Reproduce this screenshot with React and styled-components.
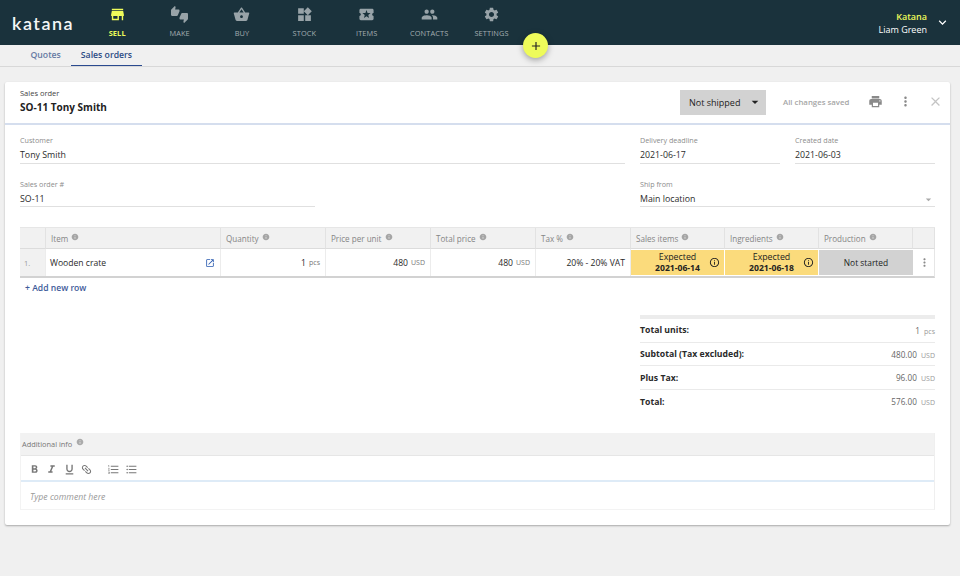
import React from "react";
import styled, { createGlobalStyle } from "styled-components";
import {
  MdStore, MdThumbsUpDown, MdShoppingBasket, MdWidgets, MdLocalActivity, MdPeople, MdSettings,
  MdKeyboardArrowDown, MdAdd, MdArrowDropDown, MdPrint, MdMoreVert, MdClose, MdOpenInNew,
  MdInfo, MdInfoOutline, MdFormatBold, MdFormatItalic, MdFormatUnderlined, MdLink,
  MdFormatListNumbered, MdFormatListBulleted,
} from "react-icons/md";

const navy = "#1a323c";
const lime = "#eefb5a";
const blue = "#2a4a8f";
const font = `"Open Sans", "Liberation Sans", sans-serif`;

const GlobalStyle = createGlobalStyle`
  html, body {
    margin: 0;
    height: 576px;
    overflow: hidden;
    background: #f0f0f0;
    font-family: ${font};
    color: #222;
  }
  * { box-sizing: border-box; }
`;

const Header = styled.header`
  position: relative;
  display: flex;
  align-items: flex-start;
  height: 45px;
  background: ${navy};
`;
const Logo = styled.div`
  width: 86px;
  padding: 12px 0 0 12px;
  font-family: "Lato", sans-serif;
  font-size: 18px;
  line-height: 22px;
  font-weight: 600;
  letter-spacing: 1.5px;
  color: #f4f6f6;
`;
const Nav = styled.nav`
  display: flex;
`;
const NavItem = styled.div`
  width: 62.4px;
  display: flex;
  flex-direction: column;
  align-items: center;
  padding-top: 6px;
  font-size: 7.4px;
  line-height: 10px;
  letter-spacing: 0.1px;
  font-weight: ${p => (p.$active ? 700 : 400)};
  color: ${p => (p.$active ? lime : "#a3adb1")};
  svg {
    width: 17px;
    height: 17px;
    margin-bottom: 5px;
    color: ${p => (p.$active ? lime : "#98a3a8")};
  }
`;
const Account = styled.div`
  margin-left: auto;
  display: flex;
  align-items: center;
  height: 45px;
  padding-right: 10px;
  color: #fff;
  svg { width: 15px; height: 15px; margin-left: 8px; margin-top: -1px; }
`;
const AccountText = styled.div`
  text-align: right;
  font-size: 9px;
  line-height: 13px;
  font-weight: 500;
`;
const Company = styled.div`
  color: ${lime};
  font-weight: 600;
`;
const Fab = styled.div`
  position: absolute;
  left: 523px;
  top: 33px;
  width: 25px;
  height: 25px;
  border-radius: 50%;
  display: flex;
  align-items: center;
  justify-content: center;
  background: ${lime};
  color: #222;
  box-shadow: 0 2px 6px rgba(0, 0, 0, 0.35);
  z-index: 2;
  svg { width: 14px; height: 14px; }
`;
const Tabs = styled.div`
  display: flex;
  height: 22px;
  padding-left: 21px;
  border-bottom: 1px solid #d8d8d8;
`;
const Tab = styled.div`
  height: 21px;
  padding: 0 9.5px;
  border-bottom: ${p => (p.$active ? `1px solid ${blue}` : "none")};
  font-size: 8.7px;
  line-height: 21px;
  font-weight: 600;
  color: ${p => (p.$active ? "#2b4a84" : "#6679a3")};
  margin-left: ${p => (p.$active ? "1px" : "0")};
`;
const Card = styled.main`
  margin: 15px 10px 0 5px;
  height: 443px;
  background: #fff;
  border-radius: 2px;
  box-shadow: 0 1px 2px rgba(0, 0, 0, 0.3);
`;
const CardHeader = styled.div`
  display: flex;
  align-items: center;
  height: 43px;
  padding: 0 6px 2px 15px;
  border-bottom: 2px solid #d5deee;
`;
const Title = styled.div`
  flex: 1;
`;
const TitleLabel = styled.div`
  font-size: 7.5px;
  line-height: 11px;
  color: #444;
`;
const TitleText = styled.div`
  font-size: 10px;
  line-height: 16px;
  font-weight: 700;
  color: #222;
`;
const StatusButton = styled.div`
  display: flex;
  align-items: center;
  justify-content: space-between;
  width: 86px;
  height: 25px;
  padding: 0 3px 0 9px;
  margin-top: 1px;
  background: #d2d2d2;
  font-size: 9px;
  font-weight: 500;
  svg { width: 16px; height: 16px; }
`;
const Saved = styled.div`
  width: 84px;
  margin-left: 17px;
  font-size: 7.8px;
  font-weight: 600;
  color: #a6a6a6;
`;
const HeaderIcon = styled.div`
  display: flex;
  width: ${p => p.$w}px;
  justify-content: center;
  color: ${p => p.$color || "#8a8a8a"};
  svg { width: ${p => p.$size || 15}px; height: ${p => p.$size || 15}px; }
`;
const Body = styled.div`
  padding: 10px 15px 0;
`;
const FieldGrid = styled.div`
  display: grid;
  grid-template-columns: 295px 310px 15px 140px 15px 140px;
  grid-template-rows: 29px 28px;
  row-gap: 15px;
`;
const Field = styled.div`
  grid-column: ${p => p.$col};
  border-bottom: 1px solid #e0e0e0;
`;
const FieldLabel = styled.div`
  font-size: 7.2px;
  line-height: 10px;
  color: #8c8c8c;
`;
const FieldValue = styled.div`
  display: flex;
  justify-content: space-between;
  align-items: center;
  margin-top: 3.5px;
  font-size: 8.8px;
  line-height: 13px;
  color: #2c2c2c;
  svg { width: 13px; height: 13px; color: #aaa; }
`;
const Table = styled.div`
  display: grid;
  grid-template-columns: 26px 175px 105px 105px 105px 95px 94px 94px 94px 22px;
  grid-template-rows: 21px 27px;
  width: 915px;
  margin-top: 20px;
  border-top: 1px solid #e6e6e6;
  border-bottom: 2px solid #d2d2d2;
  border-right: 1px solid #e6e6e6;
`;
const HeadCell = styled.div`
  display: flex;
  align-items: center;
  padding-left: 5px;
  background: #f1f1f1;
  border-right: 1px solid #e2e2e2;
  border-bottom: 1px solid #dcdcdc;
  font-size: 8.1px;
  color: #858585;
  svg { width: 8px; height: 8px; margin: -3px 0 0 3px; color: #a5a5a5; }
`;
const Cell = styled.div`
  display: flex;
  align-items: center;
  justify-content: ${p => (p.$right ? "flex-end" : "space-between")};
  padding: 0 5px 0 ${p => (p.$right ? "5px" : "4px")};
  border-right: 1px solid #ececec;
  font-size: 8.6px;
  color: #2a2a2a;
`;
const IndexCell = styled(Cell)`
  background: #f1f1f1;
  font-size: 7.4px;
  color: #999;
`;
const Unit = styled.span`
  margin-left: 3px;
  font-size: 7px;
  color: #777;
`;
const ItemLink = styled.span`
  display: flex;
  color: #2a5bb0;
  svg { width: 10px; height: 10px; }
`;
const StatusCell = styled.div`
  position: relative;
  margin: 1px ${p => (p.$grey ? "0" : "1px")} 1px 0;
  background: ${p => (p.$grey ? "#d2d2d2" : "#fbdb7c")};
  display: flex;
  flex-direction: column;
  align-items: center;
  justify-content: center;
  font-size: ${p => (p.$grey ? "8.4px" : "8.8px")};
  line-height: 11px;
  color: #222;
  b { font-weight: 700; font-size: 8.6px; }
  svg {
    position: absolute;
    right: 4px;
    top: 7px;
    width: 11px;
    height: 11px;
  }
`;
const MenuCell = styled(Cell)`
  justify-content: center;
  padding: 0;
  border-right: none;
  color: #8a8a8a;
  svg { width: 13px; height: 13px; }
`;
const AddRow = styled.div`
  margin: 4px 0 0 5px;
  font-size: 8.6px;
  line-height: 12px;
  font-weight: 600;
  color: #3d5a99;
`;
const Summary = styled.div`
  width: 295px;
  margin: 21px 0 0 620px;
  border-top: 4px solid #ececec;
`;
const SummaryRow = styled.div`
  display: flex;
  justify-content: space-between;
  align-items: center;
  height: 23.7px;
  border-bottom: ${p => (p.$last ? "none" : "1px solid #eaeaea")};
  font-size: 8.2px;
  color: #666;
  b { font-weight: 700; font-size: 8.7px; color: #2a2a2a; }
`;
const SummaryUnit = styled.span`
  margin-left: 2px;
  font-size: 7px;
  color: #999;
`;
const Editor = styled.div`
  width: 915px;
  margin-top: 19px;
  border-right: 1px solid #efefef;
  border-left: 1px solid #f3f3f3;
  border-bottom: 1px solid #f3f3f3;
`;
const EditorHead = styled.div`
  display: flex;
  align-items: center;
  height: 23px;
  padding-left: 1px;
  background: #f2f2f2;
  border-bottom: 1px solid #e6e6e6;
  font-size: 7.4px;
  color: #777;
  svg { width: 8px; height: 8px; margin: -3px 0 0 4px; color: #aaa; }
`;
const Toolbar = styled.div`
  display: flex;
  align-items: center;
  height: 26px;
  padding: 3px 0 0 6.5px;
  border-bottom: 2px solid #deebf7;
  color: #777;
  svg { width: 13px; height: 13px; margin-right: 4.5px; }
`;
const ToolGap = styled.span`
  width: 9.5px;
`;
const Comment = styled.div`
  height: 27px;
  padding-left: 9px;
  font-size: 8.7px;
  line-height: 30px;
  font-style: italic;
  color: #999;
`;
const RotatedLink = styled(MdLink)`
  transform: rotate(45deg);
`;

const nav = [
  ["SELL", MdStore, true],
  ["MAKE", MdThumbsUpDown],
  ["BUY", MdShoppingBasket],
  ["STOCK", MdWidgets],
  ["ITEMS", MdLocalActivity],
  ["CONTACTS", MdPeople],
  ["SETTINGS", MdSettings],
];

const summary = [
  ["Total units:", "1", "pcs"],
  ["Subtotal (Tax excluded):", "480.00", "USD"],
  ["Plus Tax:", "96.00", "USD"],
  ["Total:", "576.00", "USD"],
];

const heads = ["Item", "Quantity", "Price per unit", "Total price", "Tax %", "Sales items", "Ingredients", "Production"];

export default function App() {
  return (
    <>
      <GlobalStyle />
      <Header>
        <Logo>katana</Logo>
        <Nav>
          {nav.map(([label, Icon, active]) => (
            <NavItem key={label} $active={active}>
              <Icon />
              {label}
            </NavItem>
          ))}
        </Nav>
        <Account>
          <AccountText>
            <Company>Katana</Company>
            <div>Liam Green</div>
          </AccountText>
          <MdKeyboardArrowDown />
        </Account>
        <Fab><MdAdd /></Fab>
      </Header>
      <Tabs>
        <Tab>Quotes</Tab>
        <Tab $active>Sales orders</Tab>
      </Tabs>
      <Card>
        <CardHeader>
          <Title>
            <TitleLabel>Sales order</TitleLabel>
            <TitleText>SO-11 Tony Smith</TitleText>
          </Title>
          <StatusButton>Not shipped <MdArrowDropDown /></StatusButton>
          <Saved>All changes saved</Saved>
          <HeaderIcon $w={17} $size={15}><MdPrint /></HeaderIcon>
          <HeaderIcon $w={43} $size={15}><MdMoreVert /></HeaderIcon>
          <HeaderIcon $w={17} $size={15} $color="#c4c4c4"><MdClose /></HeaderIcon>
        </CardHeader>
        <Body>
          <FieldGrid>
            <Field $col="1 / 3">
              <FieldLabel>Customer</FieldLabel>
              <FieldValue>Tony Smith</FieldValue>
            </Field>
            <Field $col="4">
              <FieldLabel>Delivery deadline</FieldLabel>
              <FieldValue>2021-06-17</FieldValue>
            </Field>
            <Field $col="6">
              <FieldLabel>Created date</FieldLabel>
              <FieldValue>2021-06-03</FieldValue>
            </Field>
            <Field $col="1">
              <FieldLabel>Sales order #</FieldLabel>
              <FieldValue>SO-11</FieldValue>
            </Field>
            <Field $col="4 / 7">
              <FieldLabel>Ship from</FieldLabel>
              <FieldValue>Main location <MdArrowDropDown /></FieldValue>
            </Field>
          </FieldGrid>
          <Table>
            <HeadCell />
            {heads.map(h => (
              <HeadCell key={h}>{h} <MdInfo /></HeadCell>
            ))}
            <HeadCell />
            <IndexCell>1.</IndexCell>
            <Cell>Wooden crate <ItemLink><MdOpenInNew /></ItemLink></Cell>
            <Cell $right>1 <Unit>pcs</Unit></Cell>
            <Cell $right>480 <Unit>USD</Unit></Cell>
            <Cell $right>480 <Unit>USD</Unit></Cell>
            <Cell $right>20% - 20% VAT</Cell>
            <StatusCell>Expected <b>2021-06-14</b><MdInfoOutline /></StatusCell>
            <StatusCell>Expected <b>2021-06-18</b><MdInfoOutline /></StatusCell>
            <StatusCell $grey>Not started</StatusCell>
            <MenuCell><MdMoreVert /></MenuCell>
          </Table>
          <AddRow>+ Add new row</AddRow>
          <Summary>
            {summary.map(([label, value, unit], i) => (
              <SummaryRow key={label} $last={i === summary.length - 1}>
                <b>{label}</b>
                <span>{value} <SummaryUnit>{unit}</SummaryUnit></span>
              </SummaryRow>
            ))}
          </Summary>
          <Editor>
            <EditorHead>Additional info <MdInfo /></EditorHead>
            <Toolbar>
              <MdFormatBold />
              <MdFormatItalic />
              <MdFormatUnderlined />
              <RotatedLink />
              <ToolGap />
              <MdFormatListNumbered />
              <MdFormatListBulleted />
            </Toolbar>
            <Comment>Type comment here</Comment>
          </Editor>
        </Body>
      </Card>
    </>
  );
}
